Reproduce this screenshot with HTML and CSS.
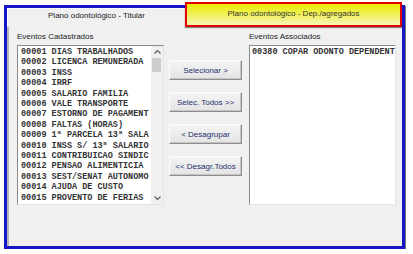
FILE: index.html
```html
<!DOCTYPE html>
<html lang="pt-BR">
<head>
  <meta charset="UTF-8">
  <title>Plano odontológico</title>
  <link rel="stylesheet" href="styles.css">
</head>
<body>
  <div class="frame">
    <div class="tabs">
      <div class="tab">Plano odontológico - Titular</div>
      <div class="tab tab-active">Plano odontológico - Dep./agregados</div>
    </div>
    <div class="panel">
      <div class="col">
        <div class="label">Eventos Cadastrados</div>
        <div class="listbox">
          <ul class="items">
            <li>00001 DIAS TRABALHADOS</li>
            <li>00002 LICENCA REMUNERADA</li>
            <li>00003 INSS</li>
            <li>00004 IRRF</li>
            <li>00005 SALARIO FAMILIA</li>
            <li>00006 VALE TRANSPORTE</li>
            <li>00007 ESTORNO DE PAGAMENT</li>
            <li>00008 FALTAS (HORAS)</li>
            <li>00009 1ª PARCELA 13ª SALA</li>
            <li>00010 INSS S/ 13ª SALARIO</li>
            <li>00011 CONTRIBUICAO SINDIC</li>
            <li>00012 PENSAO ALIMENTICIA</li>
            <li>00013 SEST/SENAT AUTONOMO</li>
            <li>00014 AJUDA DE CUSTO</li>
            <li>00015 PROVENTO DE FERIAS</li>
          </ul>
          <div class="scrollbar">
            <div class="arrow">
              <svg width="7" height="4" viewBox="0 0 7 4"><path d="M0.5 3.5 L3.5 0.5 L6.5 3.5" fill="none" stroke="#606060" stroke-width="1.2"/></svg>
            </div>
            <div class="thumb"></div>
            <div class="track"></div>
            <div class="arrow">
              <svg width="7" height="4" viewBox="0 0 7 4"><path d="M0.5 0.5 L3.5 3.5 L6.5 0.5" fill="none" stroke="#606060" stroke-width="1.2"/></svg>
            </div>
          </div>
        </div>
      </div>

      <div class="actions">
        <button class="btn">Selecionar &gt;</button>
        <button class="btn">Selec. Todos &gt;&gt;</button>
        <button class="btn">&lt; Desagrupar</button>
        <button class="btn">&lt;&lt; Desagr.Todos</button>
      </div>

      <div class="col col-right">
        <div class="label">Eventos Associados</div>
        <div class="listbox">
          <ul class="items items-right">
            <li>00380 COPAR ODONTO DEPENDENT</li>
          </ul>
        </div>
      </div>
    </div>
  </div>
</body>
</html>
```

FILE: styles.css
```css
body {
  margin: 0;
  background-color: #fff;
  font-family: "Liberation Sans", Arial, sans-serif;
  font-size: 8px;
  color: #222;
}

.frame {
  display: flex;
  flex-direction: column;
  box-sizing: border-box;
  width: 401px;
  height: 244px;
  margin: 5px 0 0 4px;
  border: 3px solid #1717c9;
  background-color: #f0f0f0;
  box-shadow: 1px 1px 0 #777;
}

.tabs {
  display: flex;
  height: 19px;
}

.tab {
  box-sizing: border-box;
  width: 178px;
  padding-top: 2px;
  line-height: 10px;
  text-align: center;
  border-top: 1px solid #fafafa;
  border-left: 1px solid #fafafa;
}

.tab-active {
  flex: 1;
  height: 25px;
  margin-top: -6px;
  padding-top: 5px;
  border: 2px solid #e30000;
  background: linear-gradient(#ecec00, #f4f4b8);
  box-shadow: 0 1px 1px rgba(0, 0, 0, 0.45);
  color: #333;
}

.panel {
  flex: 1;
  display: flex;
  padding: 5px 0 0 8px;
  border-left: 2px solid #b4b4b4;
}

.col {
  width: 147px;
}

.col-right {
  width: 147px;
  margin-left: 7px;
}

.label {
  height: 10px;
  line-height: 10px;
  margin-bottom: 3px;
}

.listbox {
  display: flex;
  box-sizing: border-box;
  height: 160px;
  background-color: #fff;
  border: 1px solid;
  border-color: #8a8a8a #e4e4e4 #e4e4e4 #8a8a8a;
}

.items {
  flex: 1;
  min-width: 0;
  margin: 0;
  padding: 1px 0 0 3px;
  list-style: none;
  overflow: hidden;
  font-family: "Liberation Mono", "Courier New", monospace;
  font-size: 8.5px;
  font-weight: bold;
  line-height: 10.4px;
  color: #333;
}

.items-right {
  padding-left: 2px;
}

.items li {
  white-space: pre;
}

.scrollbar {
  display: flex;
  flex-direction: column;
  width: 12px;
  background-color: #f0f0f0;
}

.arrow {
  display: flex;
  align-items: center;
  justify-content: center;
  height: 12px;
}

.thumb {
  height: 14px;
  margin: 0 2px 0 1px;
  background-color: #cdcdcd;
}

.track {
  flex: 1;
}

.actions {
  display: flex;
  flex-direction: column;
  gap: 12px;
  width: 73px;
  margin-left: 5px;
  padding-top: 28px;
}

.btn {
  height: 20px;
  padding: 0;
  font-family: "Liberation Sans", Arial, sans-serif;
  font-size: 8px;
  color: #1c2f6e;
  background: linear-gradient(#f4f4f4, #e4e4e4);
  border: 1px solid;
  border-color: #fdfdfd #8e8e8e #8e8e8e #fdfdfd;
  box-shadow: inset -1px -1px 0 #c4c4c4;
}
```
